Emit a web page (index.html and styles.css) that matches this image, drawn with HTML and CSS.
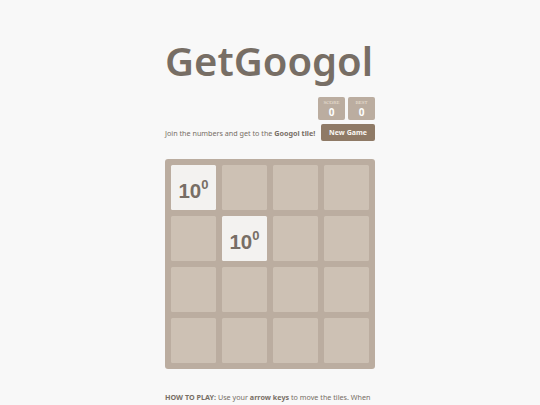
FILE: index.html
```html
<!DOCTYPE html>
<html>
<head>
<meta charset="utf-8">
<link rel="stylesheet" href="styles.css">
</head>
<body>
<div class="container">
  <h1 class="title">GetGoogol</h1>
  <div class="scores">
    <div class="score-box"><span class="score-label">SCORE</span><span class="score-value">0</span></div>
    <div class="score-box"><span class="score-label">BEST</span><span class="score-value">0</span></div>
  </div>
  <div class="above-game">
    <p class="intro">Join the numbers and get to the <strong>Googol tile!</strong></p>
    <a class="new-game">New Game</a>
  </div>
  <div class="grid">
    <div class="cell tile"><span class="num">10<sup>0</sup></span></div>
    <div class="cell"></div>
    <div class="cell"></div>
    <div class="cell"></div>
    <div class="cell"></div>
    <div class="cell tile"><span class="num">10<sup>0</sup></span></div>
    <div class="cell"></div>
    <div class="cell"></div>
    <div class="cell"></div>
    <div class="cell"></div>
    <div class="cell"></div>
    <div class="cell"></div>
    <div class="cell"></div>
    <div class="cell"></div>
    <div class="cell"></div>
    <div class="cell"></div>
  </div>
  <p class="explanation"><strong>HOW TO PLAY:</strong> Use your <strong>arrow keys</strong> to move the tiles. When two tiles with the same number touch, they merge into one!</p>
</div>
</body>
</html>
```
FILE: styles.css
```css
html, body {
  margin: 0;
  padding: 0;
  background: #f8f8f8;
  color: #776e65;
  font-family: "Noto Sans", sans-serif;
}
.container {
  width: 210px;
  margin: 0 auto;
  padding-top: 39px;
}
.title {
  margin: 0;
  font-size: 40px;
  line-height: 44px;
  font-weight: 600;
  color: #776e65;
}
.scores {
  display: flex;
  justify-content: flex-end;
  gap: 3px;
  margin-top: 14px;
}
.score-box {
  width: 27px;
  height: 23px;
  background: #bbada0;
  border-radius: 2px;
  display: flex;
  flex-direction: column;
  align-items: center;
  padding-top: 3px;
  box-sizing: border-box;
}
.score-label {
  font-size: 5px;
  line-height: 6px;
  color: #eee4da;
  font-family: "Liberation Serif", serif;
}
.score-value {
  font-size: 10px;
  line-height: 12px;
  font-weight: bold;
  color: #ffffff;
}
.above-game {
  display: flex;
  justify-content: space-between;
  align-items: center;
  margin-top: 4px;
}
.intro {
  margin: 0;
  font-size: 7.2px;
  line-height: 10px;
  white-space: nowrap;
}
.new-game {
  background: #8f7a66;
  color: #f9f6f2;
  font-size: 7px;
  font-weight: bold;
  width: 54px;
  height: 17px;
  line-height: 17px;
  text-align: center;
  border-radius: 2px;
}
.grid {
  margin-top: 18px;
  background: #bbada0;
  border-radius: 3px;
  padding: 6px;
  display: grid;
  grid-template-columns: repeat(4, 45px);
  grid-auto-rows: 45px;
  gap: 6px;
}
.cell {
  background: #cdc1b4;
  border-radius: 1.5px;
}
.tile {
  background: #f3f2f0;
  display: flex;
  align-items: center;
  justify-content: center;
}
.num {
  font-family: "Liberation Sans", Arial, sans-serif;
  font-weight: bold;
  font-size: 20.5px;
  line-height: 15px;
  color: #776e65;
}
.num sup {
  font-size: 13px;
  line-height: 1;
  vertical-align: 9px;
  font-weight: bold;
}
.explanation {
  margin: 22px 0 0 0;
  font-size: 7.2px;
  line-height: 12px;
}
```
